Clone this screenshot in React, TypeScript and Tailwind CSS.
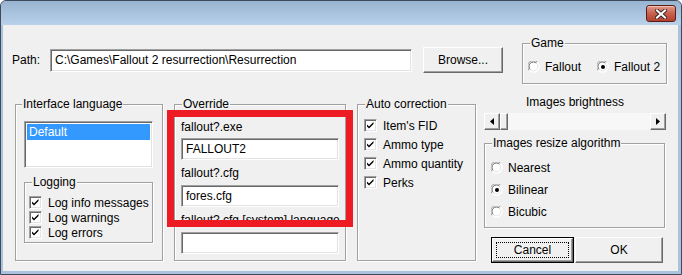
import React from 'react';

const raised =
  'border border-t-white border-l-white border-r-[#696969] border-b-[#696969] shadow-[inset_-1px_-1px_0_#a0a0a0] bg-[#f0f0f0]';
const sunken =
  'border border-t-[#a0a0a0] border-l-[#a0a0a0] border-r-white border-b-white shadow-[inset_1px_1px_0_#696969,inset_-1px_-1px_0_#e3e3e3] bg-white';

function Group({
  label,
  className,
  legend = 'ml-[7px]',
  children,
}: {
  label: string;
  className: string;
  legend?: string;
  children?: React.ReactNode;
}) {
  return (
    <fieldset
      className={`border border-[#a0a0a0] shadow-[inset_1px_1px_0_#fff,1px_1px_0_#fff] ${className}`}
    >
      <legend className={`px-[1px] h-[14px] leading-[14px] bg-[#f0f0f0] ${legend}`}>{label}</legend>
      {children}
    </fieldset>
  );
}

function CheckBox({ label }: { label: string }) {
  return (
    <div className="flex items-center gap-[6px]">
      <div className={`w-[13px] h-[13px] shrink-0 ${sunken}`}>
        <svg width="11" height="11" viewBox="0 0 11 11" className="block">
          <path d="M2 4.5 L4 6.5 L8.5 2 L8.5 4 L4 8.5 L2 6.5 Z" fill="#000" />
        </svg>
      </div>
      <span>{label}</span>
    </div>
  );
}

function Radio({ label, checked }: { label: string; checked?: boolean }) {
  return (
    <div className="flex items-center gap-[5px]">
      <svg width="12" height="12" viewBox="0 0 12 12" className="shrink-0">
        <circle cx="6" cy="6" r="5.5" fill="#fff" />
        <path d="M1.2 9.5 A5.5 5.5 0 0 1 9.5 1.2" stroke="#a0a0a0" fill="none" />
        <path d="M9.5 1.2 A5.5 5.5 0 0 1 1.2 9.5" stroke="#ffffff" fill="none" />
        <path d="M2.3 8.6 A4.4 4.4 0 0 1 8.6 2.3" stroke="#696969" fill="none" />
        <path d="M8.6 2.3 A4.4 4.4 0 0 1 2.3 8.6" stroke="#e3e3e3" fill="none" />
        {checked && <circle cx="6" cy="6" r="2" fill="#000" />}
      </svg>
      <span>{label}</span>
    </div>
  );
}

export default function App() {
  return (
    <div className="w-[682px] h-[275px] flex flex-col border border-[#3e4a5a] rounded-t-[6px] bg-[#a9c3df] font-['Liberation_Sans',Arial,sans-serif] text-[12px] leading-[14px] text-black overflow-hidden">
      {/* title bar */}
      <div className="h-[24px] shrink-0 flex justify-end items-start pt-[4px] pr-[5px] bg-gradient-to-b from-[#99b4d1] to-[#b9d1ea] rounded-t-[5px]">
        <div className="w-[30px] h-[17px] rounded-[3px] border border-[#5a1d14] bg-gradient-to-b from-[#e0998c] via-[#c9604d] to-[#b3412e] shadow-[inset_0_1px_0_#f0c0b5] flex items-center justify-center">
          <svg width="12" height="10" viewBox="0 0 12 10">
            <path d="M2 1.5 L10 8.5 M10 1.5 L2 8.5" stroke="#3b2a28" strokeWidth="4" strokeLinecap="square" />
            <path d="M2 1.5 L10 8.5 M10 1.5 L2 8.5" stroke="#fff" strokeWidth="2" strokeLinecap="square" />
          </svg>
        </div>
      </div>

      {/* client area */}
      <div className="relative ml-[2px] mr-[3px] mb-[3px] flex-1 bg-[#f0f0f0] flex flex-col">
        <div className="flex items-start pt-[11px]">
          <div className="flex items-center mt-[11px] ml-[9px]">
            <span className="w-[38px]">Path:</span>
            <div className={`w-[362px] h-[23px] flex items-center pl-[4px] ${sunken}`}>
              C:\Games\Fallout 2 resurrection\Resurrection
            </div>
            <div className={`ml-[11px] w-[80px] h-[26px] flex items-center justify-center ${raised}`}>
              Browse...
            </div>
          </div>
          <Group label="Game" className="ml-[19px] w-[145px] h-[48px]">
            <div className="flex items-center pt-[10px] pl-[5px] gap-[16px]">
              <Radio label="Fallout" />
              <Radio label="Fallout 2" checked />
            </div>
          </Group>
        </div>

        <div className="flex items-start mt-[13px] ml-[12px]">
          <Group label="Interface language" legend="ml-[6px]" className="w-[148px] h-[164px]">
            <div className="pt-[10px] pl-[8px]">
              <div className={`w-[129px] h-[47px] p-[2px] ${sunken}`}>
                <div className="h-[16px] bg-[#3399ff] text-white pl-[2px] leading-[16px]">Default</div>
              </div>
              <Group label="Logging" className="mt-[7px] w-[129px] h-[68px]">
                <div className="pt-[6px] pl-[4px] flex flex-col">
                  <div className="h-[15px] flex items-center">
                    <CheckBox label="Log info messages" />
                  </div>
                  <div className="h-[15px] flex items-center">
                    <CheckBox label="Log warnings" />
                  </div>
                  <div className="h-[15px] flex items-center">
                    <CheckBox label="Log errors" />
                  </div>
                </div>
              </Group>
            </div>
          </Group>

          <Group label="Override" className="ml-[11px] w-[172px] h-[164px]">
            <div className="pt-[9px] pl-[6px] flex flex-col">
              <span className="h-[14px]">fallout?.exe</span>
              <div className={`mt-[4px] w-[158px] h-[22px] flex items-center pl-[4px] ${sunken}`}>FALLOUT2</div>
              <span className="mt-[6px] h-[14px]">fallout?.cfg</span>
              <div className={`mt-[5px] w-[158px] h-[22px] flex items-center pl-[4px] ${sunken}`}>fores.cfg</div>
              <span className="mt-[6px] h-[14px] whitespace-nowrap">fallout?.cfg [system] language</span>
              <div className={`mt-[5px] w-[158px] h-[22px] ${sunken}`} />
            </div>
          </Group>

          <Group label="Auto correction" className="ml-[11px] w-[119px] h-[164px]">
            <div className="pt-[5px] pl-[6px] flex flex-col">
              {["Item's FID", 'Ammo type', 'Ammo quantity', 'Perks'].map((t) => (
                <div key={t} className="h-[19px] flex items-center">
                  <CheckBox label={t} />
                </div>
              ))}
            </div>
          </Group>

          <div className="ml-[8px] w-[182px] flex flex-col -mt-[2px]">
            <div className="text-center h-[14px]">Images brightness</div>
            <div className="mt-[4px] h-[17px] flex bg-[#f7f7f7]">
              <div className={`w-[16px] h-[17px] flex items-center justify-center ${raised}`}>
                <svg width="4" height="7" viewBox="0 0 4 7">
                  <path d="M4 0 L0 3.5 L4 7 Z" fill="#000" />
                </svg>
              </div>
              <div className={`w-[8px] h-[17px] ${raised}`} />
              <div className="flex-1" />
              <div className={`w-[16px] h-[17px] flex items-center justify-center ${raised}`}>
                <svg width="4" height="7" viewBox="0 0 4 7">
                  <path d="M0 0 L4 3.5 L0 7 Z" fill="#000" />
                </svg>
              </div>
            </div>
            <Group label="Images resize algorithm" className="mt-[6px] w-[181px] h-[92px]">
              <div className="pt-[7px] pl-[6px] flex flex-col">
                <div className="h-[22px] flex items-center">
                  <Radio label="Nearest" />
                </div>
                <div className="h-[22px] flex items-center">
                  <Radio label="Bilinear" checked />
                </div>
                <div className="h-[22px] flex items-center">
                  <Radio label="Bicubic" />
                </div>
              </div>
            </Group>
            <div className="mt-[9px] ml-[7px] flex gap-[1px]">
              <div className="w-[83px] h-[26px] border border-black">
                <div className={`w-full h-full p-[3px] ${raised}`}>
                  <div className="w-full h-full border border-dotted border-black flex items-center justify-center">
                    Cancel
                  </div>
                </div>
              </div>
              <div className={`w-[88px] h-[26px] flex items-center justify-center ${raised}`}>OK</div>
            </div>
          </div>
        </div>

        {/* red annotation frame */}
        <div className="absolute left-[164px] top-[85px] w-[186px] h-[117px] border-[7px] border-[#ed1c24]" />
      </div>
    </div>
  );
}
